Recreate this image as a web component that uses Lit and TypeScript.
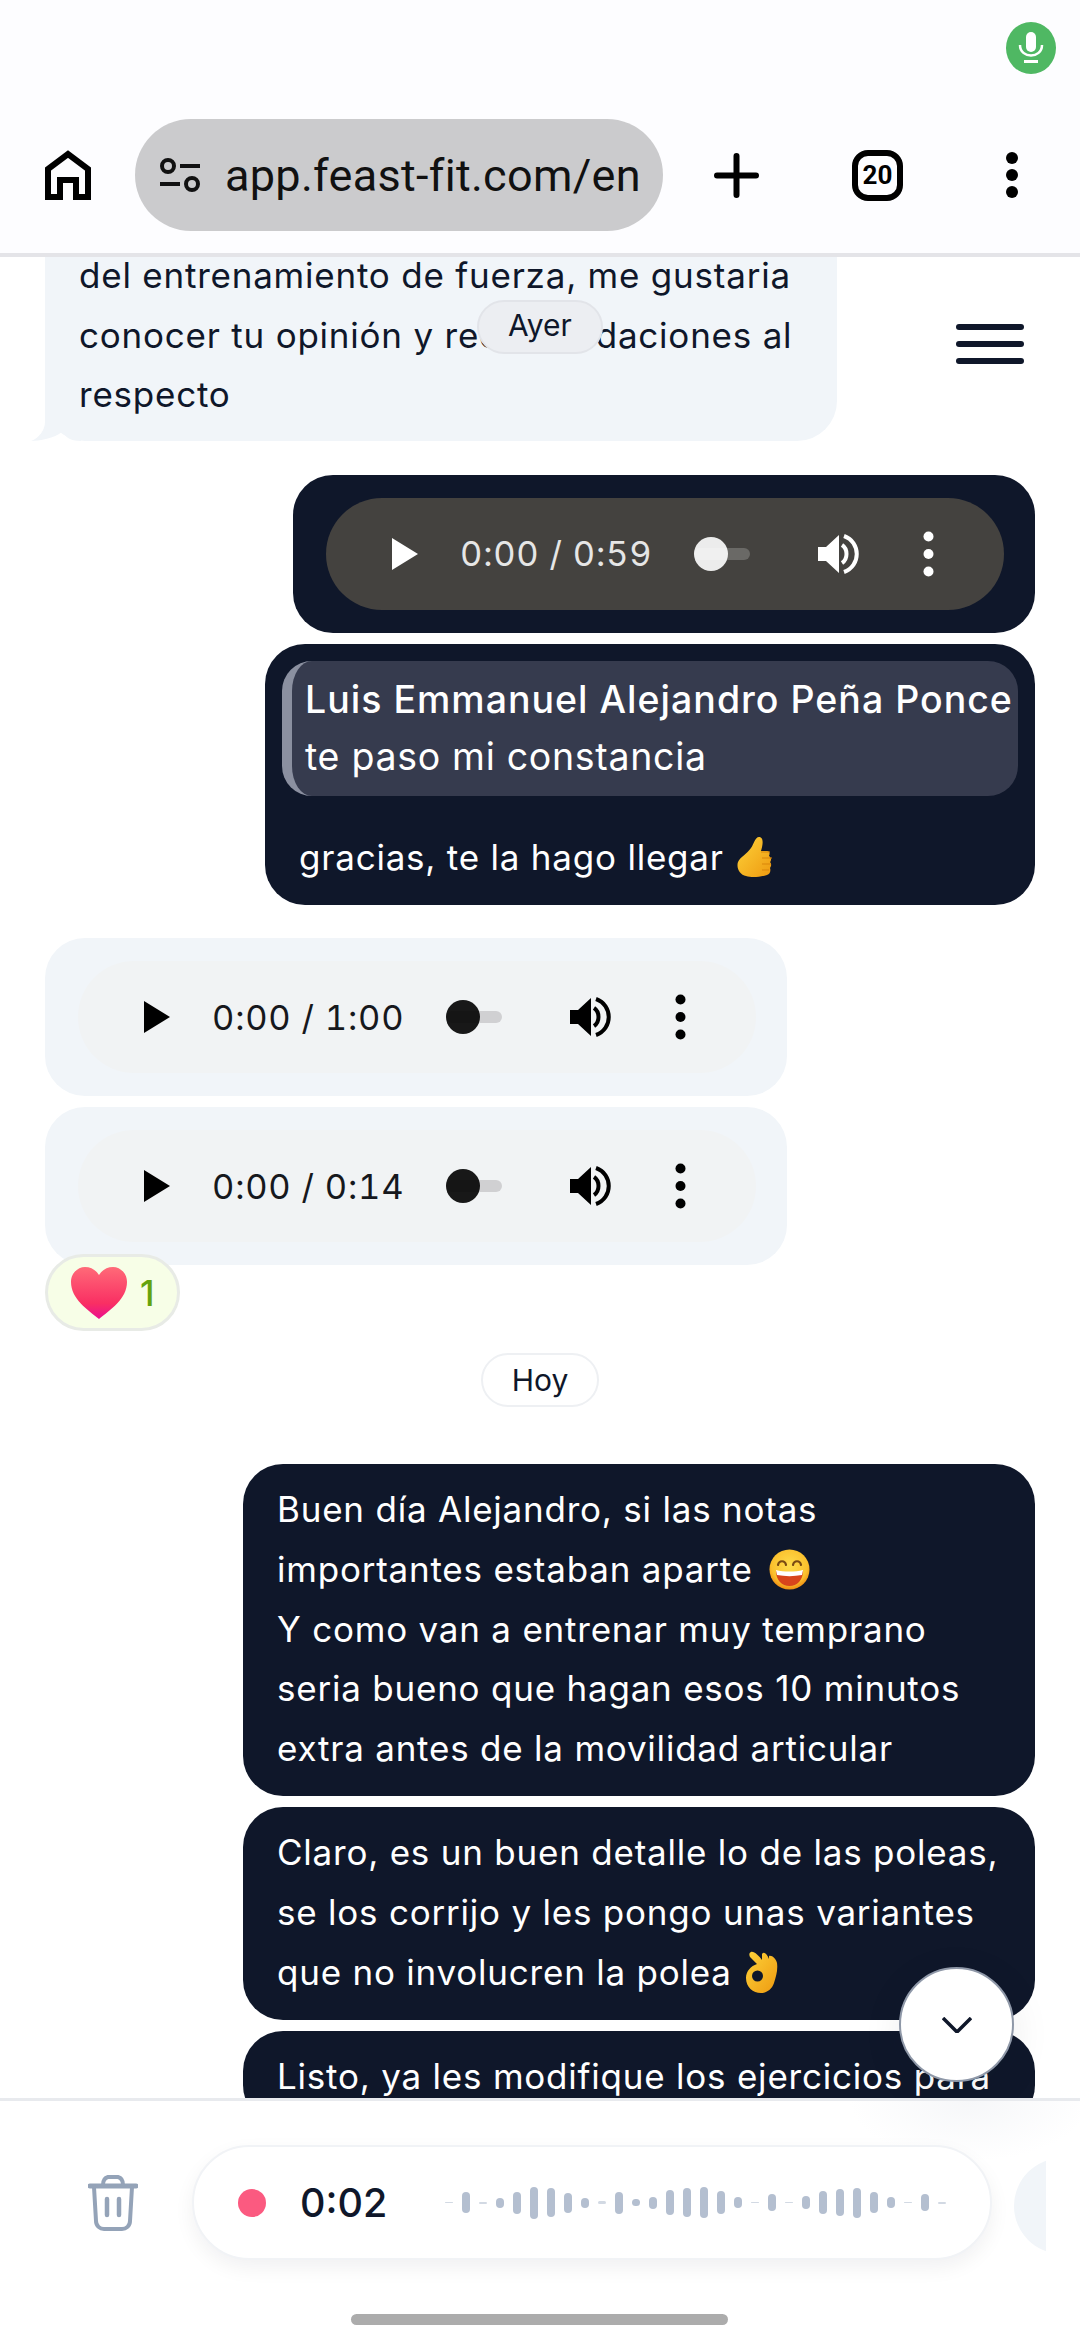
import { LitElement, html, css, TemplateResult } from "lit";
import { customElement, property } from "lit/decorators.js";

// bar heights of the recording waveform, left to right
const WAVE = [1, 21, 2, 10, 22, 32, 29, 20, 10, 3, 22, 7, 12, 25, 29, 31, 23, 11, 1, 17, 1, 13, 23, 27, 30, 21, 11, 1, 17, 2];

const thumbEmoji = html`<svg class="emoji" style="width:38px;height:42px;margin-left:3px" viewBox="0 0 38 42">
    <defs><linearGradient id="th" x1="0" y1="0" x2="1" y2="1"><stop offset="0" stop-color="#fdd23a"/><stop offset="1" stop-color="#ee9a10"/></linearGradient></defs>
    <path fill="url(#th)" d="M1 26c2-5 9-8 13-14 3-4 4-11 8-11 5 0 4 8 2 14h6c3 0 3 3 2 5 3 2 2 5 1 6 2 2 1 5 0 6 1 3 0 6-3 7-7 2-15 3-21 1-6-1-10-8-8-14z"/>
    <path fill="none" stroke="#d9860b" stroke-width="1.2" d="M24 16h9M25 22h10M25 28h9M25 34h7"/>
</svg>`;

const grinEmoji = html`<svg class="emoji" style="width:41px;height:41px;margin-left:6px" viewBox="0 0 41 41">
    <defs><radialGradient id="gr" cx="0.5" cy="0.4" r="0.6"><stop offset="0" stop-color="#fedc4c"/><stop offset="0.75" stop-color="#fbc02d"/><stop offset="1" stop-color="#ee8c12"/></radialGradient></defs>
    <circle cx="20.5" cy="20.5" r="20" fill="url(#gr)"/>
    <path fill="none" stroke="#7a4a12" stroke-width="2.2" stroke-linecap="round" d="M9 16c1-5 7-5 8 0M24 16c1-5 7-5 8 0"/>
    <path fill="#d8451c" d="M7 22c8 2 19 2 27 0 0 9-6 15-13.500 15S7 31 7 22z"/>
    <path fill="#fff" d="M7 21c8 2 19 2 27 0l-1 5c-8 1.500-17 1.500-25 0z"/>
</svg>`;

const okEmoji = html`<svg class="emoji" style="width:34px;height:42px;margin-left:3px" viewBox="0 0 34 42">
    <defs><linearGradient id="ok" x1="0" y1="0" x2="1" y2="1"><stop offset="0" stop-color="#fdd23a"/><stop offset="1" stop-color="#ee9a10"/></linearGradient></defs>
    <path fill="url(#ok)" d="M6 1c3-1 8 4 11 8l0-6c2-3 5 0 7 5l0-3c3-1 7 3 8 7 1 7-1 14-3 20-2 6-7 10-13 10C8 42 1 36 1 27c0-7 5-12 11-14L5 6C4 4 4 2 6 1z"/>
    <circle cx="12.500" cy="25" r="5.500" fill="#0f172a"/>
</svg>`;

const heartEmoji = html`<svg class="emoji" style="width:58px;height:54px" viewBox="0 0 58 54">
    <defs><linearGradient id="he" x1="0" y1="0" x2="0" y2="1"><stop offset="0" stop-color="#ff6a78"/><stop offset="0.7" stop-color="#f92f63"/><stop offset="1" stop-color="#ea0f90"/></linearGradient></defs>
    <path fill="url(#he)" d="M29 53C18 44 1 33 1 16 1 7 8 1 15 1c6 0 11 3 14 8 3-5 8-8 14-8 7 0 14 6 14 15 0 17-17 28-28 37z"/>
</svg>`;

@customElement("audio-player")
export class AudioPlayer extends LitElement {
    @property({ type: String }) time = "0:00 / 0:00";
    @property({ type: Boolean, reflect: true }) dark = false;

    static styles = css`
        :host {
            --fg: #000;
            --track: #d0d0d2;
            background: #f1f3f4;
            border-radius: 56px;
            box-sizing: border-box;
            color: #16181c;
            display: flex;
            align-items: center;
            font-family: Inter, "Liberation Sans", sans-serif;
            height: 112px;
            padding-left: 66px;
            width: 678px;
        }
        :host([dark]) {
            --fg: #fff;
            --track: #6a6966;
            background: #44423f;
            color: #e6e6e6;
        }
        svg {
            display: block;
            flex: none;
            fill: var(--fg);
        }
        .time {
            font-size: 34.500px;
            font-variant-numeric: tabular-nums;
            font-weight: 400;
            margin-left: 42px;
            width: 189px;
            white-space: nowrap;
        }
        .slider {
            background: var(--track);
            border-radius: 6px;
            height: 12px;
            margin-left: 45px;
            position: relative;
            width: 56px;
        }
        .slider::before {
            background: var(--fg);
            border-radius: 50%;
            content: "";
            height: 34px;
            left: 0;
            opacity: 0.9;
            position: absolute;
            top: -11px;
            width: 34px;
        }
        .vol { margin-left: 68px; }
        .dots { margin-left: 62px; }
    `;

    render(): TemplateResult {
        return html`
            <svg width="26" height="32" viewBox="0 0 26 32"><path d="M0 0l26 16L0 32z"/></svg>
            <span class="time">${this.time}</span>
            <div class="slider"></div>
            <svg class="vol" width="43" height="40" viewBox="0 0 43 40">
                <path d="M0 13h8L21 1v38L8 27H0z"/>
                <path fill="none" stroke="var(--fg)" stroke-width="4" d="M24 11c6 4 6 14 0 18M26 2c17 6 17 30 0 36"/>
            </svg>
            <svg class="dots" width="11" height="46" viewBox="0 0 11 46">
                <circle cx="5.500" cy="5.500" r="5"/><circle cx="5.500" cy="23" r="5"/><circle cx="5.500" cy="40.500" r="5"/>
            </svg>
        `;
    }
}

@customElement("app-root")
export class AppRoot extends LitElement {
    static styles = css`
        :host {
            background: #fff;
            color: #0f172a;
            display: block;
            font-family: Inter, "Liberation Sans", sans-serif;
            height: 2340px;
            overflow: hidden;
            position: relative;
            width: 1080px;
        }

        /* browser chrome */
        .chrome {
            background: #fdfdff;
            border-bottom: 4px solid #e4e4e8;
            height: 253px;
            position: relative;
            z-index: 2;
        }
        .status {
            display: flex;
            justify-content: flex-end;
            height: 119px;
            padding: 22px 24px 0 0;
            box-sizing: border-box;
        }
        .mic {
            align-items: center;
            background: #4fb863;
            border-radius: 50%;
            display: flex;
            height: 52px;
            justify-content: center;
            width: 50px;
        }
        .toolbar {
            align-items: center;
            display: flex;
            height: 112px;
            padding-left: 45px;
        }
        .toolbar svg { display: block; flex: none; }
        .url {
            align-items: center;
            background: #cbcbcd;
            border-radius: 56px;
            box-sizing: border-box;
            display: flex;
            gap: 25px;
            height: 112px;
            margin-left: 44px;
            padding: 0 23px 0 25px;
            width: 528px;
        }
        .url span {
            color: #111;
            font-family: Roboto, sans-serif;
            font-size: 45px;
            letter-spacing: 0.3px;
            overflow: hidden;
            white-space: nowrap;
        }
        .plus { margin-left: 51px; }
        .tabs {
            border: 6px solid #000;
            border-radius: 16px;
            box-sizing: border-box;
            color: #000;
            font-family: Roboto, sans-serif;
            font-size: 26px;
            font-weight: 700;
            height: 51px;
            line-height: 39px;
            margin-left: 93px;
            text-align: center;
            width: 51px;
        }
        .more { margin-left: 103px; }

        /* conversation */
        .chat {
            box-sizing: border-box;
            display: flex;
            flex-direction: column;
            height: 1841px;
            overflow: hidden;
            padding: 0 45px;
            position: relative;
        }
        .bubble {
            border-radius: 40px;
            box-sizing: border-box;
            flex: none;
            font-size: 35px;
            letter-spacing: 0.78px;
            line-height: 59.600px;
        }
        .in {
            align-self: flex-start;
            background: #f1f5f9;
        }
        .out {
            align-self: flex-end;
            background: #0f172a;
            color: #fff;
        }
        .text { padding: 16px 26px 18px 34px; width: 792px; }
        .first {
            border-top-left-radius: 0;
            border-top-right-radius: 0;
            margin-top: -11px;
            padding-bottom: 16px;
            padding-top: 0;
            position: relative;
        }
        .tail {
            bottom: 0;
            left: -14px;
            position: absolute;
        }
        .audio { height: 158px; padding: 23px 33px; width: 742px; }
        .reply { margin-top: 11px; padding: 17px; width: 770px; }
        .quote {
            background: #363b4e;
            border-left: 10px solid #8b90a0;
            border-radius: 30px;
            box-sizing: border-box;
            font-size: 37.500px;
            height: 135px;
            letter-spacing: 0.7px;
            line-height: 57px;
            padding: 10px 0 0 13px;
        }
        .quote b { display: block; font-weight: 500; letter-spacing: 1px; white-space: nowrap; }
        .quote span { display: block; }
        .reply p { margin: 32px 0 1px 17px; }
        .emoji { display: inline-block; vertical-align: -8px; }
        .reaction {
            align-items: center;
            align-self: flex-start;
            background: #f7fee7;
            border: 3px solid #e8ebe6;
            border-radius: 39px;
            box-sizing: border-box;
            color: #65a30d;
            display: flex;
            flex: none;
            font-size: 35px;
            font-weight: 500;
            gap: 12px;
            height: 77px;
            margin-top: -11px;
            padding-left: 22px;
            position: relative;
            width: 135px;
        }
        .day {
            align-self: center;
            background: #fff;
            border: 2px solid #eef0f3;
            border-radius: 27px;
            box-sizing: border-box;
            flex: none;
            font-size: 30px;
            line-height: 50px;
            height: 54px;
            margin-top: 22px;
            padding: 0 29px;
        }
        .ayer {
            background: #eceef2;
            border-color: #e2e4e9;
            left: 477px;
            line-height: 47px;
            margin: 0;
            padding: 0 29px;
            position: absolute;
            top: 43px;
        }
        .burger {
            background: #0f172a;
            border-radius: 3px;
            box-shadow: 0 17px 0 #0f172a, 0 34px 0 #0f172a;
            height: 6px;
            position: absolute;
            right: 56px;
            top: 67px;
            width: 68px;
        }
        .down {
            align-items: center;
            background: #fff;
            border: 2px solid #8f98a8;
            border-radius: 50%;
            box-shadow: 0 10px 40px rgba(15, 23, 42, 0.08);
            box-sizing: border-box;
            display: flex;
            height: 115px;
            justify-content: center;
            left: 899px;
            position: absolute;
            top: 1710px;
            width: 115px;
        }

        /* recording bar */
        .composer {
            background: radial-gradient(ellipse 120px 60px at 970px 0, #f6f7f9, #fff);
            border-top: 3px solid #e8eaee;
            box-sizing: border-box;
            height: 242px;
            position: relative;
        }
        .row {
            align-items: center;
            display: flex;
            height: 113px;
            padding: 45px 0 0 88px;
        }
        .pill {
            align-items: center;
            background: #fff;
            border: 2px solid #f1f3f6;
            border-radius: 58px;
            box-shadow: 0 8px 20px rgba(15, 23, 42, 0.06);
            box-sizing: border-box;
            display: flex;
            height: 115px;
            margin-left: 54px;
            padding-left: 44px;
            width: 800px;
        }
        .rec {
            background: #fb5a80;
            border-radius: 50%;
            height: 28px;
            width: 28px;
        }
        .clock {
            color: #0f172a;
            font-size: 39.500px;
            font-weight: 500;
            margin-left: 34px;
            width: 85px;
        }
        .wave {
            align-items: center;
            display: flex;
            gap: 9px;
            margin-left: 60px;
        }
        .wave i {
            background: #b4bfd0;
            border-radius: 4px;
            display: block;
            width: 8px;
        }
        .send {
            align-items: center;
            display: flex;
            height: 113px;
            margin-left: 22px;
            overflow: hidden;
            width: 32px;
        }
        .send i {
            background: #f1f5f9;
            border-radius: 50%;
            display: block;
            flex: none;
            height: 96px;
            margin-top: 6px;
            width: 96px;
        }
        .home-bar {
            background: #acacac;
            border-radius: 6px;
            height: 11px;
            margin: 55px 0 0 351px;
            width: 377px;
        }
    `;

    render(): TemplateResult {
        return html`
            <div class="chrome">
                <div class="status">
                    <div class="mic">
                        <svg width="26" height="32" viewBox="0 0 26 32" fill="none" stroke="#fff">
                            <rect x="8" y="0" width="10" height="20" rx="5" fill="#fff" stroke="none"/>
                            <path stroke-width="2.500" d="M2 13c0 14 22 14 22 0"/>
                            <path stroke-width="3" d="M6 29.500h14"/>
                        </svg>
                    </div>
                </div>
                <div class="toolbar">
                    <svg width="46" height="50" viewBox="0 0 46 50" fill="none" stroke="#000" stroke-width="6">
                        <path d="M3 47V19L23 4l20 15v28H31V30H15v17z"/>
                    </svg>
                    <div class="url">
                        <svg width="40" height="34" viewBox="0 0 40 34" fill="none" stroke="#111" stroke-width="4">
                            <circle cx="8" cy="8" r="6"/><circle cx="32" cy="26" r="6"/>
                            <path d="M20 8h20M0 26h20"/>
                        </svg>
                        <span>app.feast-fit.com/entrena</span>
                    </div>
                    <svg class="plus" width="45" height="45" viewBox="0 0 45 45" stroke="#000" stroke-width="6" stroke-linecap="round">
                        <path d="M22.500 3v39M3 22.500h39"/>
                    </svg>
                    <div class="tabs">20</div>
                    <svg class="more" width="12" height="46" viewBox="0 0 12 46" fill="#000">
                        <circle cx="6" cy="6" r="6"/><circle cx="6" cy="23" r="6"/><circle cx="6" cy="40" r="6"/>
                    </svg>
                </div>
            </div>

            <div class="chat">
                <div class="bubble in text first">
                    del entrenamiento de fuerza, me gustaria<br />
                    conocer tu opinión y recomendaciones al<br />
                    respecto
                    <svg class="tail" width="50" height="41" viewBox="0 0 50 41" fill="#f1f5f9">
                        <path d="M14 0v22c0 8-6 16-14 19 8 0 24-3 31-9 3 4 7 9 19 9V0z"/>
                    </svg>
                </div>

                <div class="bubble out audio" style="margin-top:34px">
                    <audio-player dark time="0:00 / 0:59"></audio-player>
                </div>

                <div class="bubble out reply">
                    <div class="quote">
                        <b>Luis Emmanuel Alejandro Peña Ponce</b>
                        <span>te paso mi constancia</span>
                    </div>
                    <p>gracias, te la hago llegar ${thumbEmoji}</p>
                </div>

                <div class="bubble in audio" style="margin-top:33px">
                    <audio-player time="0:00 / 1:00"></audio-player>
                </div>
                <div class="bubble in audio" style="margin-top:11px">
                    <audio-player time="0:00 / 0:14"></audio-player>
                </div>
                <div class="reaction">${heartEmoji}<span>1</span></div>

                <div class="day">Hoy</div>

                <div class="bubble out text" style="margin-top:57px">
                    Buen día Alejandro, si las notas<br />
                    importantes estaban aparte ${grinEmoji}<br />
                    Y como van a entrenar muy temprano<br />
                    seria bueno que hagan esos 10 minutos<br />
                    extra antes de la movilidad articular
                </div>
                <div class="bubble out text" style="margin-top:11px">
                    Claro, es un buen detalle lo de las poleas,<br />
                    se los corrijo y les pongo unas variantes<br />
                    que no involucren la polea ${okEmoji}
                </div>
                <div class="bubble out text" style="margin-top:11px">
                    Listo, ya les modifique los ejercicios para
                </div>

                <div class="day ayer">Ayer</div>
                <div class="burger"></div>
                <div class="down">
                    <svg width="30" height="16" viewBox="0 0 30 16" fill="none" stroke="#0f172a" stroke-width="3.500">
                        <path d="M1 1l14 14L29 1"/>
                    </svg>
                </div>
            </div>

            <div class="composer">
                <div class="row">
                    <svg width="50" height="56" viewBox="0 0 50 56" fill="none" stroke="#94a3b8" stroke-width="4" stroke-linecap="round">
                        <path stroke-width="5" d="M2 11h46"/>
                        <path d="M15 10c0-4 1-7 5-8h10c4 1 5 4 5 8"/>
                        <path d="M6 12l2 34c0 5 4 8 8 8h18c4 0 8-3 8-8l2-34"/>
                        <path stroke-width="4.500" d="M19 24v16M31 24v16"/>
                    </svg>
                    <div class="pill">
                        <div class="rec"></div>
                        <div class="clock">0:02</div>
                        <div class="wave">
                            ${WAVE.map(
                                (h) => html`<i style="height:${h}px;opacity:${h < 4 ? 0.6 : 1}"></i>`
                            )}
                        </div>
                    </div>
                    <div class="send"><i></i></div>
                </div>
                <div class="home-bar"></div>
            </div>
        `;
    }
}
